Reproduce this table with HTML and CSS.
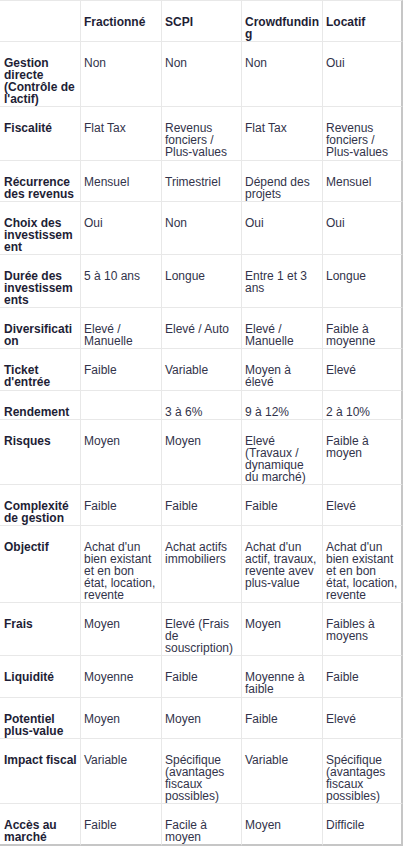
FILE: index.html
```html
<!DOCTYPE html>
<html lang="fr">
<head>
<meta charset="utf-8">
<title>Comparatif investissements</title>
<link rel="stylesheet" href="styles.css">
</head>
<body>
<div class="grid">
  <div class="c h"></div><div class="c h">Fractionné</div><div class="c h">SCPI</div><div class="c h">Crowdfunding</div><div class="c h last">Locatif</div>

  <div class="c l">Gestion directe (Contrôle de l'actif)</div><div class="c">Non</div><div class="c">Non</div><div class="c">Non</div><div class="c last">Oui</div>

  <div class="c l">Fiscalité</div><div class="c">Flat Tax</div><div class="c">Revenus fonciers / Plus-values</div><div class="c">Flat Tax</div><div class="c last">Revenus fonciers / Plus-values</div>

  <div class="c l">Récurrence des revenus</div><div class="c">Mensuel</div><div class="c">Trimestriel</div><div class="c">Dépend des projets</div><div class="c last">Mensuel</div>

  <div class="c l">Choix des investissement</div><div class="c">Oui</div><div class="c">Non</div><div class="c">Oui</div><div class="c last">Oui</div>

  <div class="c l">Durée des investissements</div><div class="c">5 à 10 ans</div><div class="c">Longue</div><div class="c">Entre 1 et 3 ans</div><div class="c last">Longue</div>

  <div class="c l">Diversification</div><div class="c">Elevé / Manuelle</div><div class="c">Elevé / Auto</div><div class="c">Elevé / Manuelle</div><div class="c last">Faible à moyenne</div>

  <div class="c l">Ticket d'entrée</div><div class="c">Faible</div><div class="c">Variable</div><div class="c">Moyen à élevé</div><div class="c last">Elevé</div>

  <div class="c l">Rendement</div><div class="c"></div><div class="c">3 à 6%</div><div class="c">9 à 12%</div><div class="c last">2 à 10%</div>

  <div class="c l">Risques</div><div class="c">Moyen</div><div class="c">Moyen</div><div class="c">Elevé (Travaux / dynamique du marché)</div><div class="c last">Faible à moyen</div>

  <div class="c l">Complexité de gestion</div><div class="c">Faible</div><div class="c">Faible</div><div class="c">Faible</div><div class="c last">Elevé</div>

  <div class="c l">Objectif</div><div class="c">Achat d'un bien existant et en bon état, location, revente</div><div class="c">Achat actifs immobiliers</div><div class="c">Achat d'un actif, travaux, revente avev plus-value</div><div class="c last">Achat d'un bien existant et en bon état, location, revente</div>

  <div class="c l">Frais</div><div class="c">Moyen</div><div class="c">Elevé (Frais de souscription)</div><div class="c">Moyen</div><div class="c last">Faibles à moyens</div>

  <div class="c l">Liquidité</div><div class="c">Moyenne</div><div class="c">Faible</div><div class="c">Moyenne à faible</div><div class="c last">Faible</div>

  <div class="c l">Potentiel plus-value</div><div class="c">Moyen</div><div class="c">Moyen</div><div class="c">Faible</div><div class="c last">Elevé</div>

  <div class="c l">Impact fiscal</div><div class="c">Variable</div><div class="c">Spécifique (avantages fiscaux possibles)</div><div class="c">Variable</div><div class="c last">Spécifique (avantages fiscaux possibles)</div>

  <div class="c l b">Accès au marché</div><div class="c b">Faible</div><div class="c b">Facile à moyen</div><div class="c b">Moyen</div><div class="c last b">Difficile</div>
</div>
</body>
</html>
```

FILE: styles.css
```css
html, body {
  margin: 0;
  padding: 0;
  background: #ffffff;
}

.grid {
  display: grid;
  grid-template-columns: 80px 81px 80px 81px 81px;
  width: 403px;
  font-family: "Liberation Sans", Arial, sans-serif;
  font-size: 12px;
  line-height: 12px;
  color: #32334a;
}

.c {
  box-sizing: border-box;
  border-top: 1px solid #e8e8e8;
  border-left: 1px solid #e8e8e8;
  padding: 15px 2.5px 1.2px 3px;
  overflow-wrap: anywhere;
}

.c:nth-child(5n+1) {
  border-left: none;
  padding-left: 4px;
}

.h,
.l {
  font-weight: bold;
  color: #1e1e36;
}

.last {
  border-right: 2px solid #c6c6c6;
  padding-right: 2px;
}

.b {
  border-bottom: 2px solid #c6c6c6;
}
```
